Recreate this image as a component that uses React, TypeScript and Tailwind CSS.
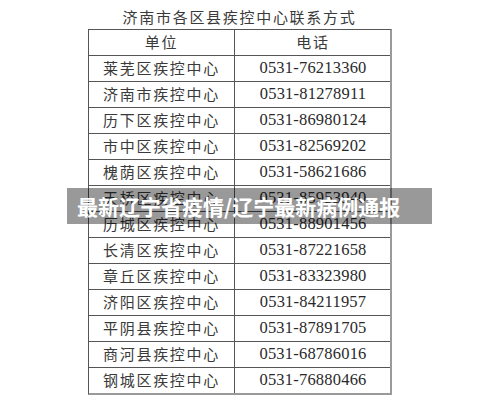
import React from "react";

const rows: [string, string][] = [
  ["莱芜区疾控中心", "0531-76213360"],
  ["济南市疾控中心", "0531-81278911"],
  ["历下区疾控中心", "0531-86980124"],
  ["市中区疾控中心", "0531-82569202"],
  ["槐荫区疾控中心", "0531-58621686"],
  ["天桥区疾控中心", "0531-85953940"],
  ["历城区疾控中心", "0531-88901456"],
  ["长清区疾控中心", "0531-87221658"],
  ["章丘区疾控中心", "0531-83323980"],
  ["济阳区疾控中心", "0531-84211957"],
  ["平阴县疾控中心", "0531-87891705"],
  ["商河县疾控中心", "0531-68786016"],
  ["钢城区疾控中心", "0531-76880466"],
];

const cjk = "font-['Noto_Sans_CJK_SC',sans-serif]";
const num = "font-['Liberation_Serif','Noto_Sans_CJK_SC',serif]";

export default function App() {
  return (
    <div className="relative w-[500px] h-[414px] bg-white overflow-hidden">
      <div className="flex flex-col pl-[88px] pt-[6px]">
        <div
          className={`w-[303px] h-[23px] flex items-center justify-center text-[15px] tracking-[1.7px] text-[#3a3a3a] ${cjk}`}
        >
          济南市各区县疾控中心联系方式
        </div>
        <div className="w-[304px] border-l border-t border-l-[#555] border-t-[#555] border-r-2 border-b-2 border-r-[#9a9a9a] border-b-[#9a9a9a]">
          <div className="grid grid-cols-[146px_156px] h-[26px] border-b border-[#555]">
            <div
              className={`flex items-center justify-center border-r border-[#555] text-[15px] tracking-[1.7px] text-[#3a3a3a] ${cjk}`}
            >
              单位
            </div>
            <div
              className={`flex items-center justify-center text-[15px] tracking-[1.7px] text-[#3a3a3a] ${cjk}`}
            >
              电话
            </div>
          </div>
          {rows.map(([name, tel], i) => (
            <div
              key={name}
              className={`grid grid-cols-[146px_156px] ${
                i === rows.length - 1 ? "h-[25px]" : "h-[26px] border-b border-[#555]"
              }`}
            >
              <div
                className={`flex items-center justify-center border-r border-[#555] text-[15px] tracking-[1.7px] text-[#3a3a3a] ${cjk}`}
              >
                {name}
              </div>
              <div
                className={`flex items-center justify-center text-[16.5px] tracking-[0.2px] text-[#2a2a2a] ${num}`}
              >
                {tel}
              </div>
            </div>
          ))}
        </div>
      </div>
      <div className="absolute left-[67px] top-[188px] w-[365px] h-[36px] bg-[rgba(0,0,0,0.4)] flex items-center pl-[10px]">
        <span className={`text-white font-bold text-[21px] leading-none whitespace-nowrap ${cjk}`}>
          最新辽宁省疫情/辽宁最新病例通报
        </span>
      </div>
    </div>
  );
}
